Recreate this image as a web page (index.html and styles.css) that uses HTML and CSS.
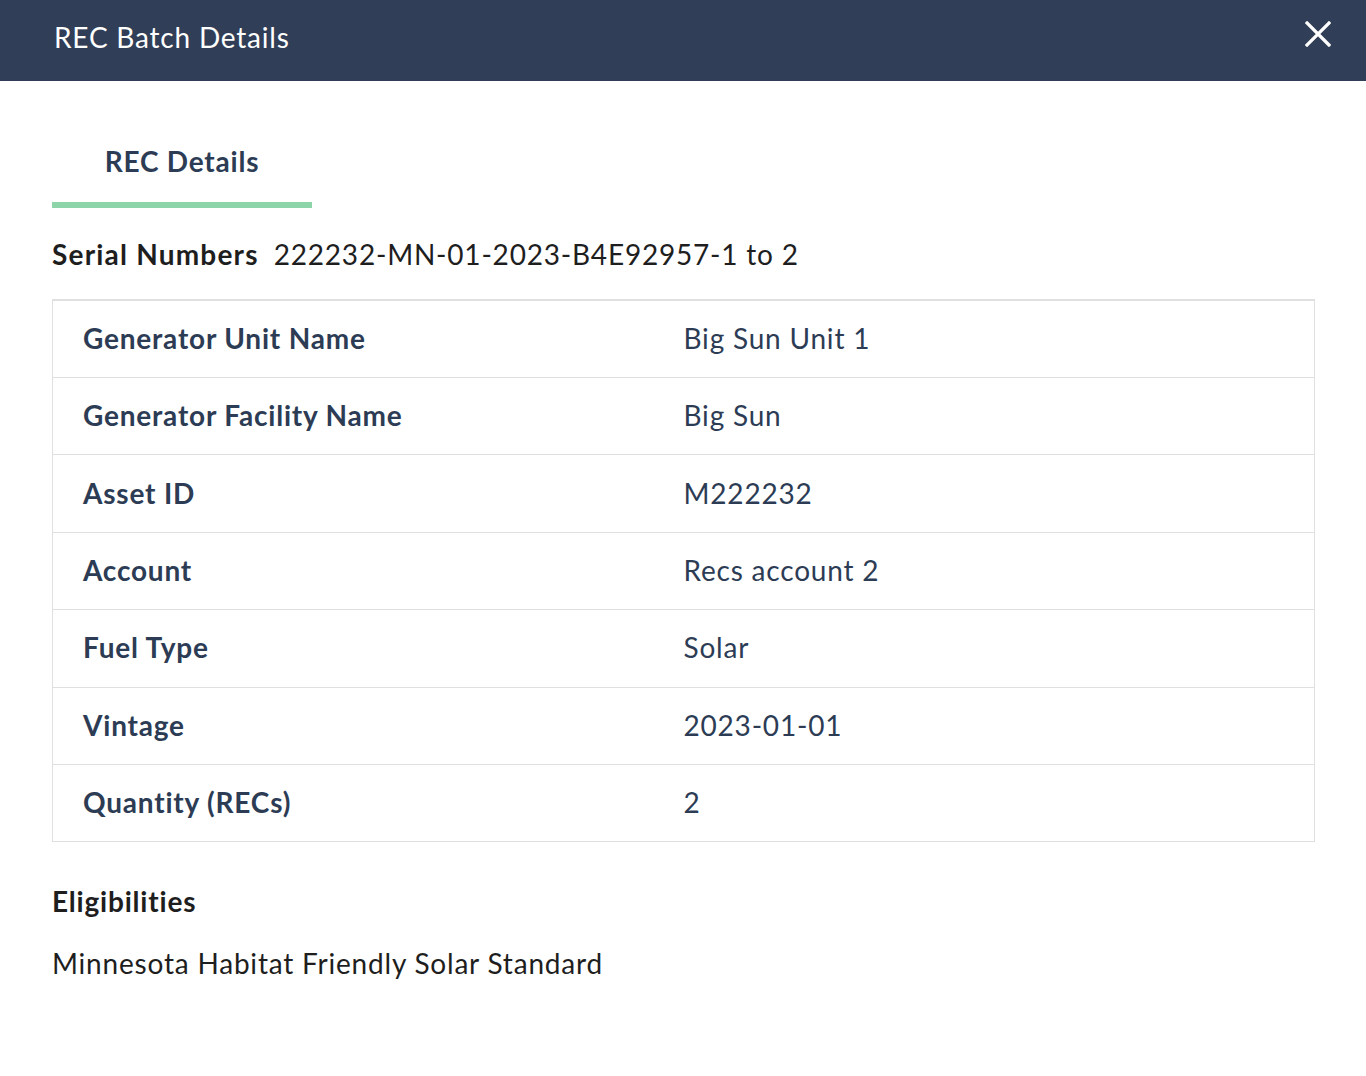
FILE: index.html
```html
<!DOCTYPE html>
<html>
<head>
<meta charset="utf-8">
<link rel="stylesheet" href="styles.css">
</head>
<body>
<div class="header">
  <div class="title">REC Batch Details</div>
  <button class="close" aria-label="Close">
    <svg width="26" height="26" viewBox="0 0 26 26"><path d="M2 2 L24 24 M24 2 L2 24" stroke="#fff" stroke-width="3.2" stroke-linecap="square"/></svg>
  </button>
</div>
<div class="content">
  <div class="tabs">
    <div class="tab active">REC Details</div>
  </div>
  <div class="serial"><span class="serial-label">Serial Numbers</span><span class="serial-value">222232-MN-01-2023-B4E92957-1 to 2</span></div>
  <div class="table">
    <div class="row"><div class="cell label">Generator Unit Name</div><div class="cell value">Big Sun Unit 1</div></div>
    <div class="row"><div class="cell label">Generator Facility Name</div><div class="cell value">Big Sun</div></div>
    <div class="row"><div class="cell label">Asset ID</div><div class="cell value">M222232</div></div>
    <div class="row"><div class="cell label">Account</div><div class="cell value">Recs account 2</div></div>
    <div class="row"><div class="cell label">Fuel Type</div><div class="cell value">Solar</div></div>
    <div class="row"><div class="cell label">Vintage</div><div class="cell value">2023-01-01</div></div>
    <div class="row"><div class="cell label">Quantity (RECs)</div><div class="cell value">2</div></div>
  </div>
  <div class="elig-title">Eligibilities</div>
  <div class="elig-text">Minnesota Habitat Friendly Solar Standard</div>
</div>
</body>
</html>
```
FILE: styles.css
```css
* { box-sizing: border-box; }
body {
  margin: 0;
  font-family: "Lato", "Open Sans", sans-serif;
  letter-spacing: 0.8px;
  background: #fff;
  color: #1f1f1f;
}
.header {
  height: 81px;
  background: #303e57;
  display: flex;
  align-items: center;
  justify-content: space-between;
  padding: 0 27px 0 54px;
}
.title {
  color: #fff;
  font-size: 28px;
  margin-top: -8px;
}
.close {
  background: none;
  border: 0;
  padding: 8px;
  display: flex;
  margin-top: -14px;
}
.content {
  padding: 0 51px 0 52px;
}
.tabs {
  margin-top: 39px;
  display: flex;
}
.tab {
  width: 260px;
  height: 88px;
  display: flex;
  align-items: center;
  justify-content: center;
  font-size: 28px;
  font-weight: 700;
  color: #2d3c55;
}
.tab.active {
  border-bottom: 6px solid #8dd5a8;
}
.serial {
  margin-top: 28px;
  font-size: 28px;
  color: #1e1e1e;
  line-height: 36px;
}
.serial-label { font-weight: 700; margin-right: 15px; letter-spacing: 1.2px; }
.table {
  margin-top: 27px;
  border: 1px solid #e0e0e0;
  border-top: 2px solid #e0e0e0;
}
.row {
  display: grid;
  grid-template-columns: 1fr 1fr;
  height: 77.4px;
  align-items: center;
  border-top: 1px solid #e0e0e0;
}
.row:first-child { border-top: 0; height: 76px; }
.cell {
  font-size: 28px;
  color: #2d3c55;
  margin-top: -2px;
}
.cell.label { font-weight: 700; padding-left: 30px; }
.cell.value { padding-left: 0; }
.elig-title {
  margin-top: 42px;
  font-size: 28px;
  font-weight: 700;
  color: #1e1e1e;
}
.elig-text {
  margin-top: 28px;
  font-size: 28px;
  color: #1e1e1e;
}
```
